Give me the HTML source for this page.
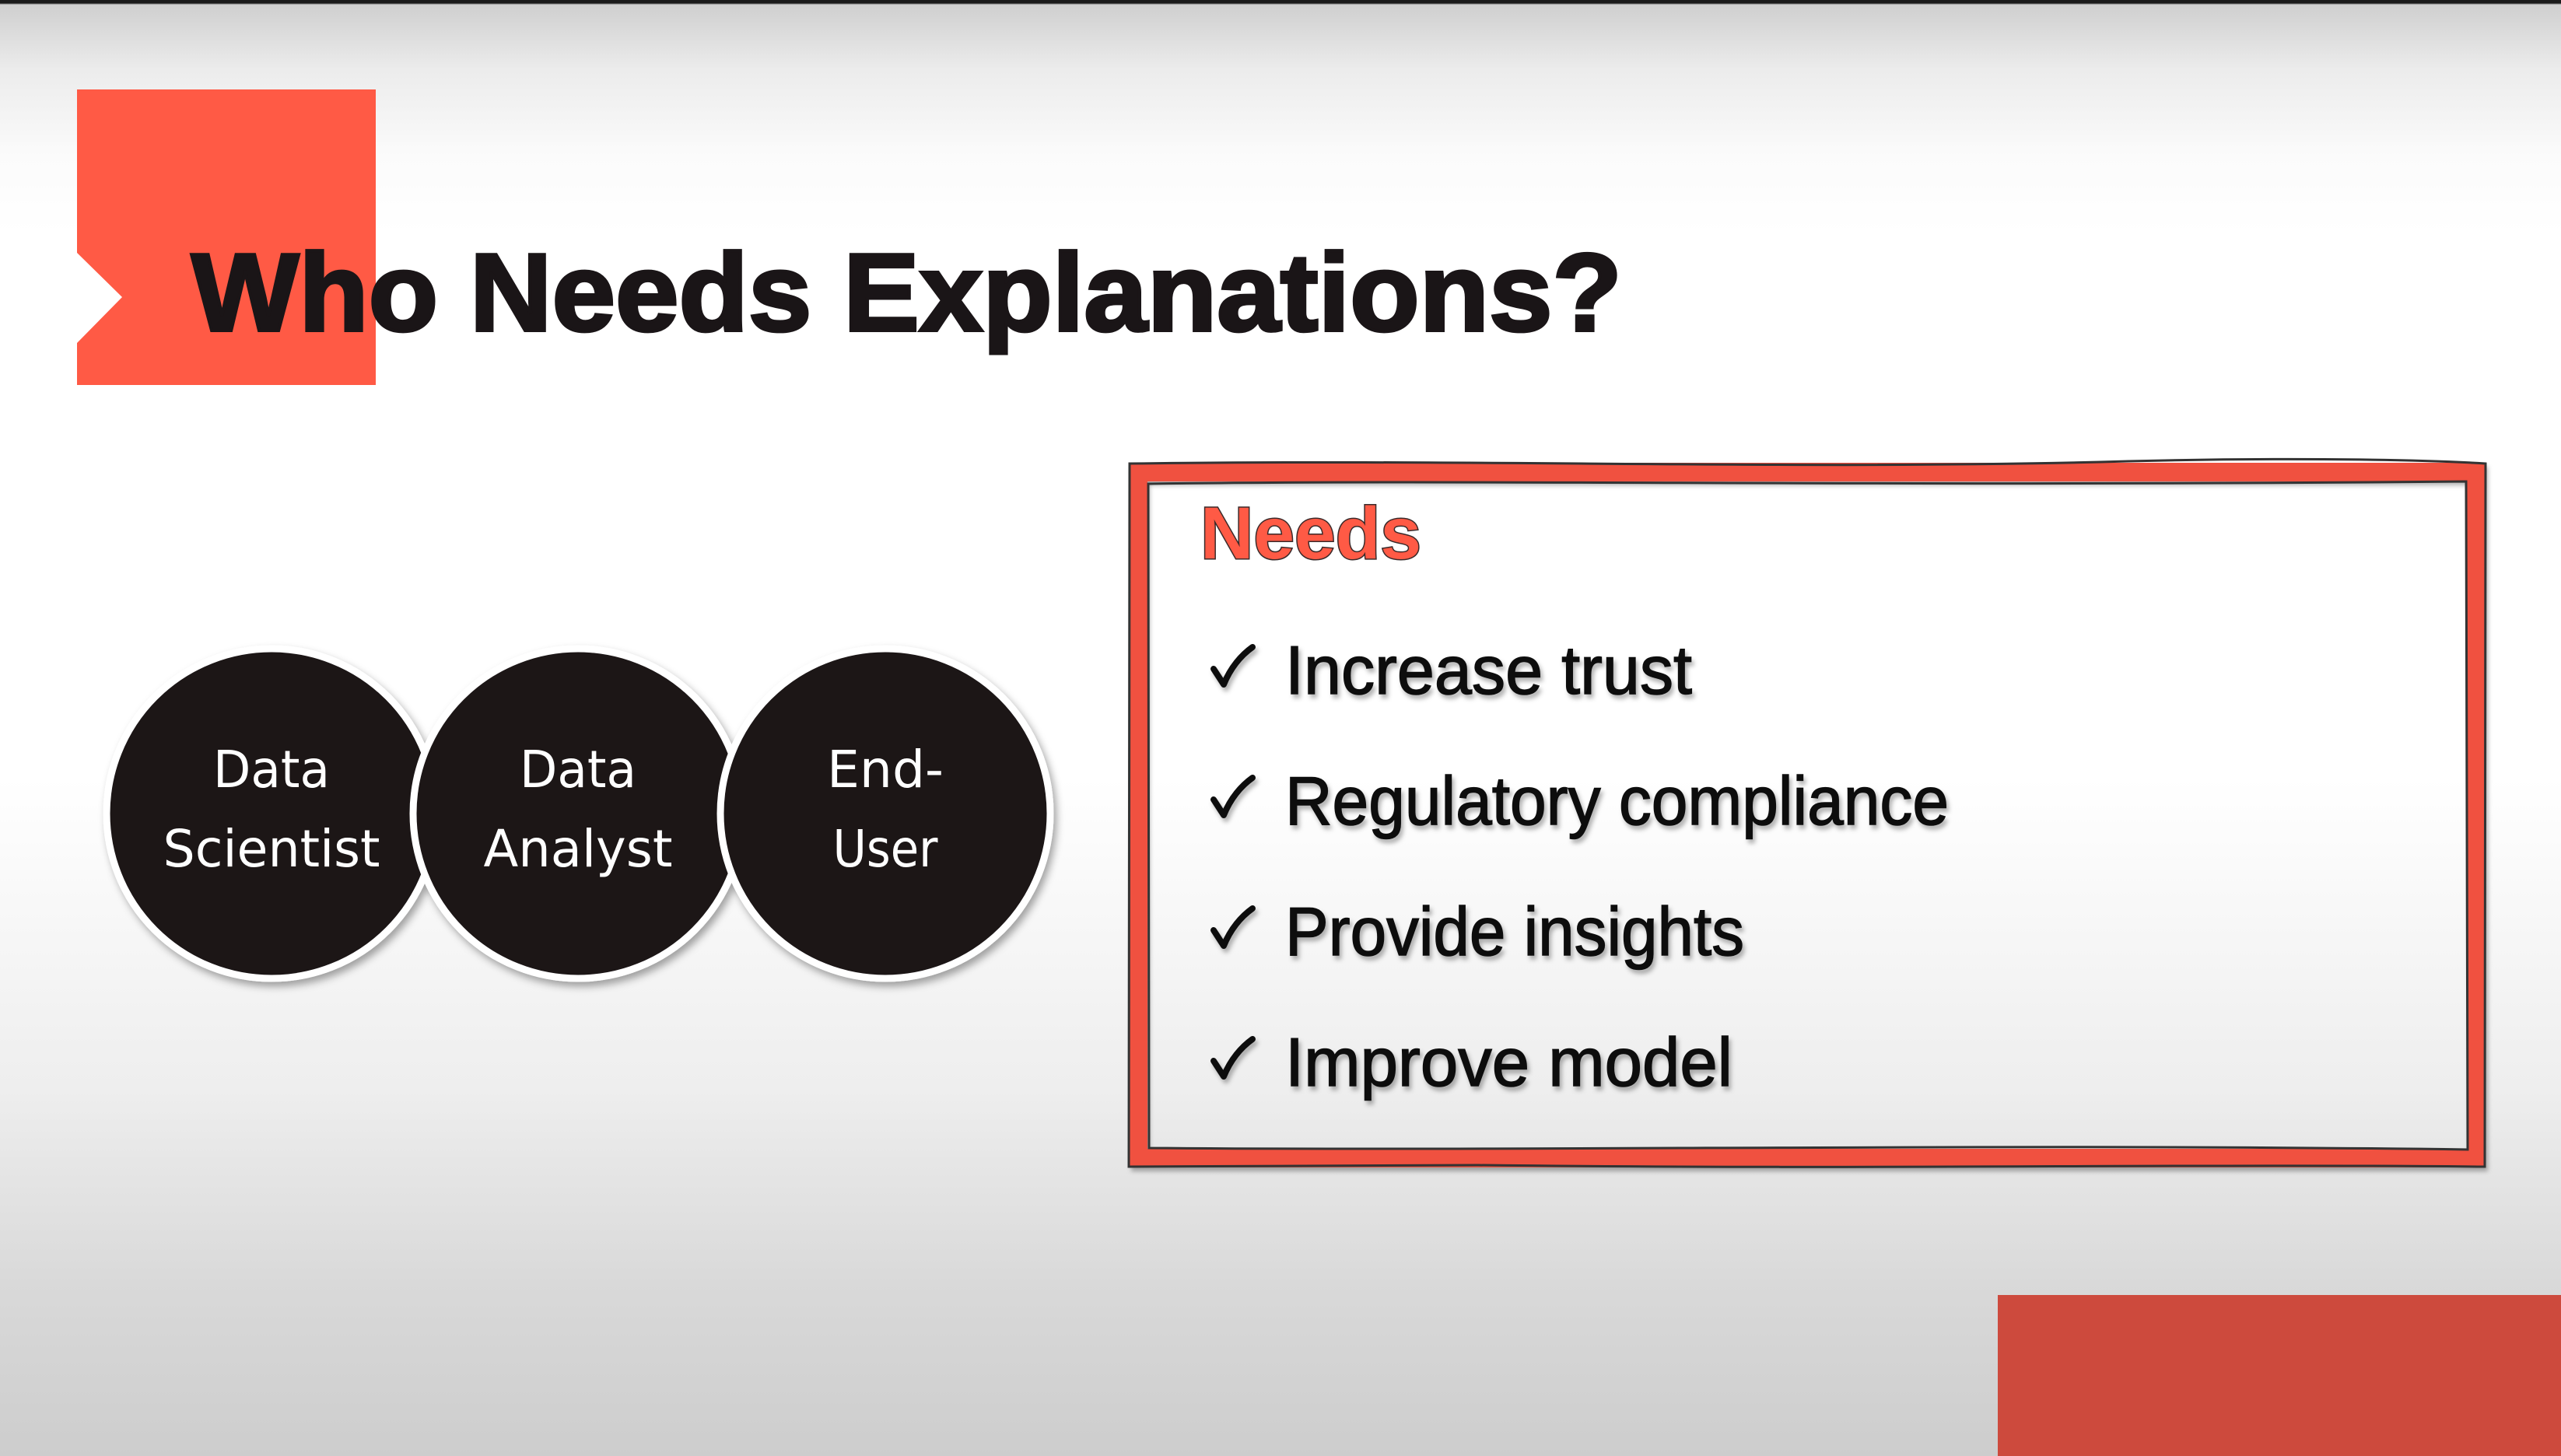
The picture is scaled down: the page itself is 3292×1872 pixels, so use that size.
<!DOCTYPE html>
<html><head><meta charset="utf-8"><style>
html,body{margin:0;padding:0;width:3292px;height:1872px;overflow:hidden}
body{background:linear-gradient(to bottom,#1a1a1a 0px,#1a1a1a 4px,#cfcfcf 6px,#ececec 90px,#fbfbfb 200px,#ffffff 300px,#ffffff 1000px,#eeeeee 1400px,#d9d9d9 1650px,#cdcdcd 1872px)}
svg{position:absolute;left:0;top:0}
</style></head><body>
<svg width="3292" height="1872" viewBox="0 0 3292 1872" xmlns="http://www.w3.org/2000/svg">
<defs>
<filter id="sh" x="-20%" y="-20%" width="140%" height="140%"><feDropShadow dx="4" dy="6" stdDeviation="5" flood-color="#000" flood-opacity="0.35"/></filter>
<filter id="sh2" x="-10%" y="-30%" width="120%" height="160%"><feDropShadow dx="3" dy="5" stdDeviation="3" flood-color="#000" flood-opacity="0.3"/></filter>
</defs>
<path d="M99 115 H483 V495 H99 V441 L157 382 L99 325 Z" fill="#ff5a45"/>
<text x="246" y="425" font-family="Liberation Sans, sans-serif" font-weight="bold" font-size="142" fill="#1a1517" stroke="#1a1517" stroke-width="4" textLength="1839" lengthAdjust="spacingAndGlyphs">Who Needs Explanations?</text>

<g filter="url(#sh)">
<circle cx="349" cy="1046" r="212" fill="#1a1517" stroke="#fff" stroke-width="9"/>
<circle cx="743" cy="1046" r="212" fill="#1a1517" stroke="#fff" stroke-width="9"/>
<circle cx="1138" cy="1046" r="212" fill="#1a1517" stroke="#fff" stroke-width="9"/>
</g>
<g font-family="DejaVu Sans, sans-serif" font-size="66" fill="#fff" text-anchor="middle">
<text x="349" y="1012" textLength="150" lengthAdjust="spacingAndGlyphs">Data</text><text x="349" y="1114" textLength="279" lengthAdjust="spacingAndGlyphs">Scientist</text>
<text x="743" y="1012" textLength="150" lengthAdjust="spacingAndGlyphs">Data</text><text x="743" y="1114" textLength="243" lengthAdjust="spacingAndGlyphs">Analyst</text>
<text x="1138" y="1012" textLength="150" lengthAdjust="spacingAndGlyphs">End-</text><text x="1138" y="1114" textLength="135" lengthAdjust="spacingAndGlyphs">User</text>
</g>

<g filter="url(#sh2)">
<rect x="1463" y="607" width="1720" height="882" fill="none" stroke="#f0513f" stroke-width="24"/>
</g>
<path d="M1452 596 C1900 590 2300 604 2700 594 C2900 588 3100 590 3195 596 L3194 1500 C2800 1496 2400 1504 1900 1498 L1451 1500 Z" fill="none" stroke="#333" stroke-width="3"/>
<path d="M1476 622 C1900 616 2400 626 3170 619 L3172 1478 C2600 1470 2000 1480 1477 1476 Z" fill="none" stroke="#333" stroke-width="3"/>

<text x="1543" y="718" font-family="Liberation Sans, sans-serif" font-weight="bold" font-size="95" fill="#ff5a45" stroke="#3a2a2a" stroke-width="3" paint-order="stroke" textLength="284" lengthAdjust="spacingAndGlyphs">Needs</text>

<g fill="#111" filter="url(#sh2)">
<g fill="none" stroke="#111" stroke-width="8" stroke-linecap="round" stroke-linejoin="round">
<path d="M1560 860 L1573 880 C1582 858 1596 842 1610 832"/>
<path d="M1560 1028 L1573 1048 C1582 1026 1596 1010 1610 1000"/>
<path d="M1560 1196 L1573 1216 C1582 1194 1596 1178 1610 1168"/>
<path d="M1560 1364 L1573 1384 C1582 1362 1596 1346 1610 1336"/>
</g>
<g font-family="Liberation Sans, sans-serif" font-size="88" stroke="#111" stroke-width="1.5">
<text x="1652" y="892" textLength="523" lengthAdjust="spacingAndGlyphs">Increase trust</text>
<text x="1652" y="1060" textLength="853" lengthAdjust="spacingAndGlyphs">Regulatory compliance</text>
<text x="1652" y="1228" textLength="590" lengthAdjust="spacingAndGlyphs">Provide insights</text>
<text x="1652" y="1396" textLength="575" lengthAdjust="spacingAndGlyphs">Improve model</text>
</g>
</g>

<rect x="2568" y="1665" width="724" height="207" fill="#cd4a3d"/>
</svg>
</body></html>
